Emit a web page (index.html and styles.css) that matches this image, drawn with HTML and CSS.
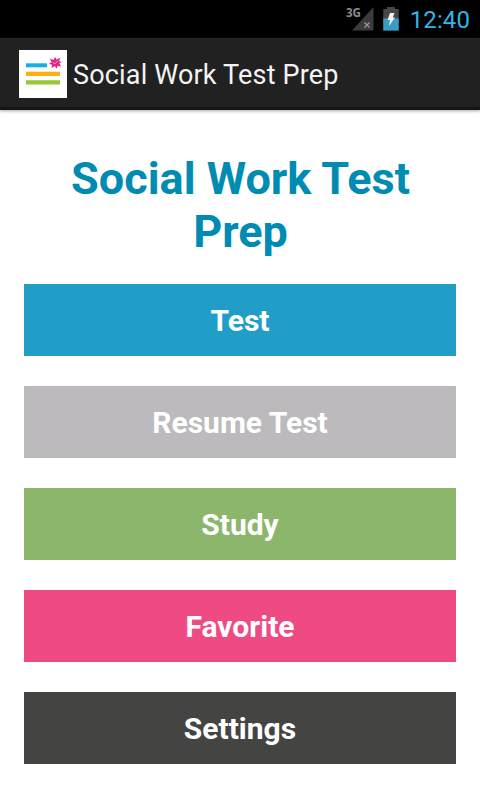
FILE: index.html
```html
<!DOCTYPE html>
<html lang="en">
<head>
  <meta charset="UTF-8">
  <title>Social Work Test Prep</title>
  <link rel="stylesheet" href="styles.css">
</head>
<body>
  <div class="status-bar">
    <svg class="signal" width="28" height="24" viewBox="0 0 28 24">
      <path d="M27.5 0V23.5H6Z" fill="#3b3b3b"/>
      <path d="M18.5 15.5l5 5M23.5 15.5l-5 5" stroke="#999" stroke-width="1.2"/>
      <text x="0" y="10" class="network" textLength="15" lengthAdjust="spacingAndGlyphs">3G</text>
    </svg>
    <svg class="battery" width="16" height="24" viewBox="0 0 16 24">
      <path d="M4 0h8v2h3.7v21.5H.3V2H4Z" fill="#474747"/>
      <path d="M.3 11.5h15.4v12H.3Z" fill="#3a9cc4"/>
      <path d="M7 6H11.5L9.8 10.5H12L6 19L7 13H4.5Z" fill="#f2f2f2"/>
    </svg>
    <span class="clock">12:40</span>
  </div>

  <header class="action-bar">
    <svg class="logo" width="48" height="48" viewBox="0 0 48 48">
      <path d="M0 0h48v48H0Z" fill="#fff"/>
      <path d="M7 13.3h21v4H7Z" fill="#16aee8"/>
      <path d="M7 21.8h34v4.2H7Z" fill="#ffb010"/>
      <path d="M7 30.2h34v4.2H7Z" fill="#98c832"/>
      <path d="M36 6.8l1.5 2.8 3.8-1.8-1.2 3.3 2.5.8-2.3 1.4 1.9 3.2-3.7-.8-.8 3-2-2.6-3.3 2.1.7-3.5-3.2-.9 2.8-1.6-1.9-3.7 3.9 1.4Z" fill="#e82280"/>
      <path d="M34 12.5l2 1.5 3-3.5" fill="none" stroke="#f7a9cf" stroke-width="1"/>
    </svg>
    <span class="app-name">Social Work Test Prep</span>
  </header>

  <main class="menu">
    <h1>Social Work Test Prep</h1>
    <button class="btn test">Test</button>
    <button class="btn resume">Resume Test</button>
    <button class="btn study">Study</button>
    <button class="btn favorite">Favorite</button>
    <button class="btn settings">Settings</button>
  </main>
</body>
</html>
```
FILE: styles.css
```css
* {
  box-sizing: border-box;
  margin: 0;
  padding: 0;
}

body {
  height: 800px;
  overflow: hidden;
  font-family: Roboto, sans-serif;
  background-color: #fff;
}

.status-bar {
  height: 38px;
  padding-right: 10px;
  display: flex;
  justify-content: flex-end;
  align-items: center;
  background-color: #000;
}

.signal,
.battery {
  margin-bottom: 1px;
}

.signal {
  margin-right: 9px;
  overflow: visible;
}

.network {
  font-family: "Open Sans", sans-serif;
  font-size: 13px;
  font-weight: bold;
  fill: #8c8c8c;
}

.battery {
  margin-right: 11px;
}

.clock {
  padding-top: 1px;
  font-size: 24px;
  letter-spacing: 0.1px;
  color: #33b5e5;
}

.action-bar {
  height: 72px;
  padding: 2px 0 0 19px;
  display: flex;
  align-items: center;
  background-color: #212121;
  border-top: 1px solid #2b2b2b;
  border-bottom: 3px solid #151515;
  box-shadow: 0 1px 3px rgba(40, 20, 30, 0.4);
}

.app-name {
  margin-left: 6px;
  padding-top: 2px;
  font-size: 27px;
  letter-spacing: 0.17px;
  color: #f3f3f3;
}

.menu {
  padding: 42px 24px 0;
  display: flex;
  flex-direction: column;
}

h1 {
  margin-bottom: 26px;
  padding-left: 1px;
  font-size: 45px;
  line-height: 53px;
  text-align: center;
  color: #008cb2;
}

.btn {
  height: 72px;
  margin-bottom: 30px;
  border: none;
  font-family: inherit;
  font-size: 30px;
  font-weight: bold;
  color: #fff;
}

.test {
  background-color: #219ec8;
}

.resume {
  background-color: #bcbabd;
}

.study {
  background-color: #8db66d;
}

.favorite {
  background-color: #ef4a83;
}

.settings {
  background-color: #444542;
}
```
